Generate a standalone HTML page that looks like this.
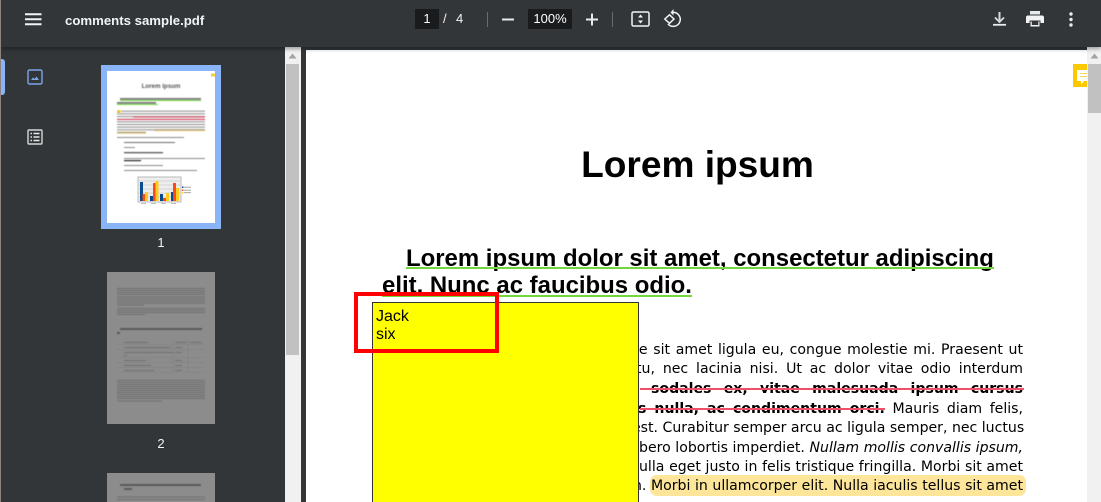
<!DOCTYPE html>
<html><head><meta charset="utf-8"><style>
html,body{margin:0;padding:0;width:1101px;height:502px;overflow:hidden;background:#323639;}
*{box-sizing:border-box}
#root{position:relative;width:1101px;height:502px;overflow:hidden;background:#323639}
.a{position:absolute}
#tb{left:0;top:0;width:1101px;height:47px;background:#323639;box-shadow:0 2px 4px rgba(0,0,0,.35);z-index:5;color:#f1f3f4;font-family:"Liberation Sans",sans-serif;font-size:13px}
.sep{position:absolute;top:12px;width:1px;height:15px;background:#6a6d70}
.bx{position:absolute;top:9px;height:20px;background:#191b1c;text-align:center;line-height:20px;color:#fff}
.l{position:absolute;height:20px;font:14.1px/20px "DejaVu Sans",sans-serif;color:#000;white-space:nowrap;text-align:justify;text-align-last:justify}
.h{position:absolute;font:bold 23.95px/28px "Liberation Sans",sans-serif;color:#000;white-space:nowrap}
</style></head><body><div id="root">
<div class="a" style="left:0;top:0;width:1px;height:502px;background:#8d8480;z-index:9"></div>
<div class="a" id="tb">
<svg class="a" style="left:25px;top:13px" width="17" height="13"><path d="M0 1.2H16.5M0 6.2H16.5M0 11.2H16.5" stroke="#f1f3f4" stroke-width="2"/></svg>
<div class="a" style="left:65px;top:12px;font-weight:bold;font-size:13.2px;line-height:17px;white-space:nowrap">comments sample.pdf</div>
<div class="bx" style="left:415px;width:24px">1</div>
<div class="a" style="left:443px;top:9px;line-height:20px">/</div>
<div class="a" style="left:456px;top:9px;line-height:20px">4</div>
<div class="sep" style="left:487px"></div>
<svg class="a" style="left:501px;top:13px" width="14" height="14"><path d="M1 6.5H13" stroke="#e8eaed" stroke-width="2"/></svg>
<div class="bx" style="left:528px;width:44px">100%</div>
<svg class="a" style="left:585px;top:13px" width="14" height="14"><path d="M1 6.5H13M7 .5V12.500" stroke="#e8eaed" stroke-width="2"/></svg>
<div class="sep" style="left:612px"></div>
<svg class="a" style="left:631px;top:10px" width="20" height="18" fill="none"><rect x="1" y="2" width="17" height="14" rx="1.500" stroke="#f1f3f4" stroke-width="1.500"/><path d="M9.500 4.500L12 7.500H7ZM9.500 13.500L12 10.500H7Z" fill="#f1f3f4"/></svg>
<svg class="a" style="left:663px;top:8px" width="20" height="21" fill="none"><path d="M9 4.500A7 7 0 1 1 5 16" stroke="#f1f3f4" stroke-width="1.500"/><path d="M10.500 1L7.500 4.500L10.500 7.500Z" fill="#f1f3f4"/><path d="M1.800 11L6.500 6.800L11 11L6.500 15.300Z" stroke="#f1f3f4" stroke-width="1.500"/></svg>
<svg class="a" style="left:992px;top:11px" width="15" height="15" fill="none"><path d="M7.500 1V9.500" stroke="#d8dadc" stroke-width="2"/><path d="M3 6.500L7.500 11L12 6.500" stroke="#d8dadc" stroke-width="1.800"/><path d="M1 13.800H14" stroke="#e8eaed" stroke-width="1.800"/></svg>
<svg class="a" style="left:1026px;top:11px" width="18" height="16"><path d="M4 0H14V3.500H4Z" fill="#e8eaed"/><path d="M2 4.500H16A2 2 0 0 1 18 6.500V12H14.500V9.500H3.500V12H0V6.500A2 2 0 0 1 2 4.500Z" fill="#f1f3f4"/><rect x="4.500" y="10.500" width="9" height="5" fill="#f1f3f4"/><rect x="5.800" y="10.500" width="6.500" height="3.500" fill="#323639"/></svg>
<svg class="a" style="left:1068px;top:12px" width="6" height="15"><circle cx="3" cy="2" r="1.700" fill="#e8eaed"/><circle cx="3" cy="7.500" r="1.700" fill="#e8eaed"/><circle cx="3" cy="13" r="1.700" fill="#e8eaed"/></svg>
</div>

<div class="a" style="left:1px;top:59px;width:4px;height:36px;background:#8ab4f8;border-radius:0 3px 3px 0"></div>
<svg class="a" style="left:27px;top:69px" width="16" height="16" fill="none"><rect x="1" y="1" width="14" height="14" rx="1.500" stroke="#7ba6e8" stroke-width="1.400"/><path d="M4 11L6 8.500L7.500 10L9.500 7.500L12 11Z" fill="#7ba6e8"/></svg>
<svg class="a" style="left:27px;top:129px" width="16" height="16" fill="none"><rect x="1" y="1" width="14" height="14" rx="1" stroke="#d5d6d7" stroke-width="1.400"/><path d="M3.500 4.500H5M3.500 8H5M3.500 11.500H5M6.500 4.500H12.500M6.500 8H12.500M6.500 11.500H12.500" stroke="#e8e8e8" stroke-width="1.400"/></svg>

<svg class="a" style="left:101px;top:65px" width="120" height="164">
<defs><filter id="b" x="-5%" y="-5%" width="110%" height="110%"><feGaussianBlur stdDeviation=".4"/></filter></defs>
<rect width="120" height="164" fill="#8ab4f8"/><rect x="6" y="6" width="108" height="152" fill="#fff"/>
<rect x="110" y="8.500" width="4" height="3" fill="#f5cf3a"/>
<rect x="16" y="45" width="3.500" height="3" fill="#f5cf3a"/>
<g filter="url(#b)">
<rect x="53" y="64" width="51" height="2.400" fill="#f5dd95"/><rect x="16" y="66.500" width="29" height="2.400" fill="#f5dd95"/>
<g fill="#8a8a8a">
<rect x="20" y="45.700" width="84" height="1"/><rect x="16" y="48.300" width="88" height="1"/><rect x="16" y="51" width="88" height="1"/><rect x="16" y="53.700" width="88" height="1"/><rect x="16" y="56.300" width="88" height="1"/><rect x="16" y="59" width="88" height="1"/><rect x="16" y="61.700" width="88" height="1"/><rect x="16" y="64.300" width="88" height="1"/><rect x="16" y="67" width="29" height="1"/>
<rect x="16" y="72" width="67" height="1"/>
<rect x="23" y="77" width="51" height="1" fill="#6a6a6a"/><rect x="23" y="82" width="11" height="1"/><rect x="23" y="87" width="39" height="1.300" fill="#555"/>
<rect x="23" y="93" width="81" height="1"/><rect x="23" y="95" width="17" height="1.200" fill="#222"/><rect x="23" y="100" width="39" height="1"/><rect x="23" y="105" width="73" height="1"/>
</g>
<rect x="32" y="51.500" width="72" height="1" fill="#e0405f"/><rect x="16" y="54" width="88" height="1" fill="#e0405f"/>
<g fill="#777"><rect x="19" y="33" width="81" height="1.800"/><rect x="16" y="37" width="39" height="1.800"/></g>
<rect x="19" y="35" width="81" height="1" fill="#72d63c"/><rect x="16" y="39" width="41" height="1" fill="#72d63c"/>
</g>
<text x="60" y="23" text-anchor="middle" font-family="Liberation Sans" font-weight="bold" font-size="6.200" fill="#555" filter="url(#b)">Lorem ipsum</text>
<rect x="37" y="112" width="43" height="25" fill="#eee" stroke="#bbb"/>
<path d="M38 116H79M38 120H79M38 124H79M38 128H79M38 132H79" stroke="#ccc" stroke-width=".7"/>
<g fill="#0a4a8f"><rect x="39" y="117" width="3" height="19"/><rect x="49" y="131" width="3" height="5"/><rect x="59" y="129" width="3" height="7"/><rect x="70" y="127" width="2.500" height="9"/></g>
<g fill="#ff4b12"><rect x="41.500" y="129" width="3" height="7"/><rect x="52" y="118" width="3" height="18"/><rect x="62" y="133" width="3" height="3"/><rect x="72" y="118" width="3" height="18"/></g>
<g fill="#ffcc1f"><rect x="44" y="127" width="3" height="9"/><rect x="54.500" y="116" width="3" height="20"/><rect x="65" y="128" width="3" height="8"/><rect x="75" y="123" width="3" height="13"/></g>
<rect x="81" y="121.500" width="1.500" height="1.500" fill="#0a4a8f"/><rect x="81" y="124.500" width="1.500" height="1.500" fill="#ff4b12"/><rect x="81" y="127" width="1.500" height="1.500" fill="#ffcc1f"/>
<path d="M83 122.200H90M83 125.200H90M83 127.700H90" stroke="#999" stroke-width=".8"/>
<path d="M40 138.500H45M50 138.500H55M60 138.500H65M70 138.500H75" stroke="#aaa" stroke-width=".8"/>
</svg>
<div class="a" style="left:101px;top:234px;width:120px;text-align:center;font:13px/17px 'Liberation Sans',sans-serif;color:#f1f3f4">1</div>

<svg class="a" style="left:107px;top:272px" width="108" height="152">
<rect width="108" height="152" fill="#8c8c8c"/>
<g fill="#707070" filter="url(#b)">
<rect x="10" y="16" width="88" height="1"/><rect x="10" y="18" width="88" height="1"/><rect x="10" y="20" width="88" height="1"/><rect x="10" y="22" width="88" height="1"/><rect x="10" y="24.500" width="88" height="1"/><rect x="10" y="26.500" width="88" height="1"/><rect x="10" y="28.500" width="88" height="1"/><rect x="10" y="30.500" width="88" height="1"/><rect x="10" y="32.500" width="27" height="1"/>
<rect x="10" y="36" width="88" height="1"/><rect x="10" y="38" width="88" height="1"/><rect x="10" y="40" width="88" height="1"/><rect x="10" y="42" width="28" height="1"/>
<rect x="13" y="56" width="82" height="2" fill="#5a5a5a"/><rect x="10" y="60" width="3" height="2" fill="#5a5a5a"/>
<rect x="17" y="70" width="24" height="1"/><rect x="68" y="70" width="12" height="1"/><rect x="83" y="70" width="12" height="1"/>
<rect x="17" y="75" width="47" height="1"/><rect x="68" y="75" width="7" height="1"/>
<rect x="17" y="80" width="50" height="1"/><rect x="68" y="80" width="7" height="1"/><rect x="17" y="83" width="3" height="1"/>
<rect x="17" y="88" width="22" height="1"/><rect x="68" y="88" width="7" height="1"/>
<rect x="17" y="93" width="27" height="1"/><rect x="68" y="93" width="7" height="1"/>
<rect x="17" y="98" width="30" height="1"/><rect x="68" y="98" width="7" height="1"/>
<rect x="10" y="108" width="88" height="1"/><rect x="10" y="110" width="88" height="1"/><rect x="10" y="112" width="88" height="1"/><rect x="10" y="114" width="88" height="1"/><rect x="10" y="116" width="88" height="1"/><rect x="10" y="118" width="88" height="1"/><rect x="10" y="120" width="88" height="1"/><rect x="10" y="122" width="88" height="1"/><rect x="10" y="124" width="88" height="1"/><rect x="10" y="126" width="88" height="1"/><rect x="10" y="128.500" width="45" height="1"/>
</g>
<path d="M10 72.500H98M10 77.500H98M10 85.500H98M10 90.500H98M10 95.500H98M10 100.500H98M66 67V100M81 67V100" stroke="#828282" stroke-width=".6" fill="none"/>
</svg>
<div class="a" style="left:101px;top:435px;width:120px;text-align:center;font:13px/17px 'Liberation Sans',sans-serif;color:#f1f3f4">2</div>

<svg class="a" style="left:107px;top:473px" width="108" height="29">
<rect width="108" height="29" fill="#8c8c8c"/>
<g filter="url(#b)"><rect x="13" y="11" width="81" height="2" fill="#5a5a5a"/><rect x="17" y="15" width="8" height="2" fill="#5a5a5a"/>
<rect x="10" y="23.500" width="88" height="1" fill="#707070"/><rect x="10" y="26" width="88" height="1" fill="#707070"/></g>
</svg>

<div class="a" style="left:285px;top:47px;width:16px;height:455px;background:#f1f1f1"></div>
<div class="a" style="left:286px;top:64px;width:13px;height:291px;background:#c1c1c1"></div>
<svg class="a" style="left:288px;top:53px" width="9" height="6"><path d="M.5 5.500L4.500 .5L8.500 5.500Z" fill="#a3a3a3"/></svg>

<div class="a" style="left:306px;top:50px;width:781px;height:452px;background:#fff;overflow:hidden"></div>

<div class="a" style="left:306px;top:142px;width:783px;text-align:center;font:bold 37.100px/44px 'Liberation Sans',sans-serif;color:#000">Lorem ipsum</div>

<div class="h" style="left:406px;top:245px">Lorem ipsum dolor sit amet, consectetur adipiscing</div>
<div class="a" style="left:406px;top:267px;width:588px;height:2px;background:#72d63c"></div>
<div class="h" style="left:382px;top:272px">elit. Nunc ac faucibus odio.</div>
<div class="a" style="left:382px;top:295px;width:310px;height:2px;background:#72d63c"></div>

<div class="l" style="top:340px;left:630px;width:393px">ue sit amet ligula eu, congue molestie mi. Praesent ut</div>
<div class="l" style="top:359px;left:636px;width:387px">tu, nec lacinia nisi. Ut ac dolor vitae odio interdum</div>
<div class="l" style="top:379px;left:651px;width:372px;font-weight:bold">sodales ex, vitae malesuada ipsum cursus</div>
<div class="l" style="top:399px;left:638px;width:385px"><b>s nulla, ac condimentum orci.</b> Mauris diam felis,</div>
<div class="l" style="top:418px;left:632px;width:391px">est. Curabitur semper arcu ac ligula semper, nec luctus</div>
<div class="l" style="top:438px;left:639px;width:384px">bero lobortis imperdiet. <i>Nullam mollis convallis ipsum,</i></div>
<div class="a" style="left:650px;top:475px;width:376px;height:21px;background:#fde59a;border-radius:7px"></div>
<div class="l" style="top:457px;left:639px;width:384px">ulla eget justo in felis tristique fringilla. Morbi sit amet</div>
<div class="l" style="top:476px;left:633px;width:390px">n. Morbi in ullamcorper elit. Nulla iaculis tellus sit amet</div>
<div class="a" style="left:640px;top:388px;width:384px;height:2px;background:#ef4f68"></div>
<div class="a" style="left:640px;top:408px;width:245px;height:2px;background:#ef4f68"></div>

<div class="a" style="left:372px;top:302px;width:267px;height:210px;background:#ff0;border:1px solid #333;font:16px/18px 'Liberation Sans',sans-serif;color:#000;padding:5px 3px">Jack<br>six</div>
<div class="a" style="left:354px;top:292px;width:145px;height:61px;border:4px solid #f00"></div>

<svg class="a" style="left:1073px;top:64px" width="14" height="23"><rect width="14" height="23" fill="#fcc900"/><path d="M4 6H14V17H11L8 20.500V17H4Z" fill="#fff"/><path d="M7 9.500H14M7 12.500H14" stroke="#f5d55a"/></svg>

<div class="a" style="left:1087px;top:47px;width:14px;height:455px;background:#f1f1f1"></div>
<div class="a" style="left:1088px;top:64px;width:13px;height:49px;background:#c1c1c1"></div>
<svg class="a" style="left:1090px;top:53px" width="9" height="6"><path d="M.5 5.500L4.500 .5L8.500 5.500Z" fill="#a3a3a3"/></svg>
</div></body></html>
